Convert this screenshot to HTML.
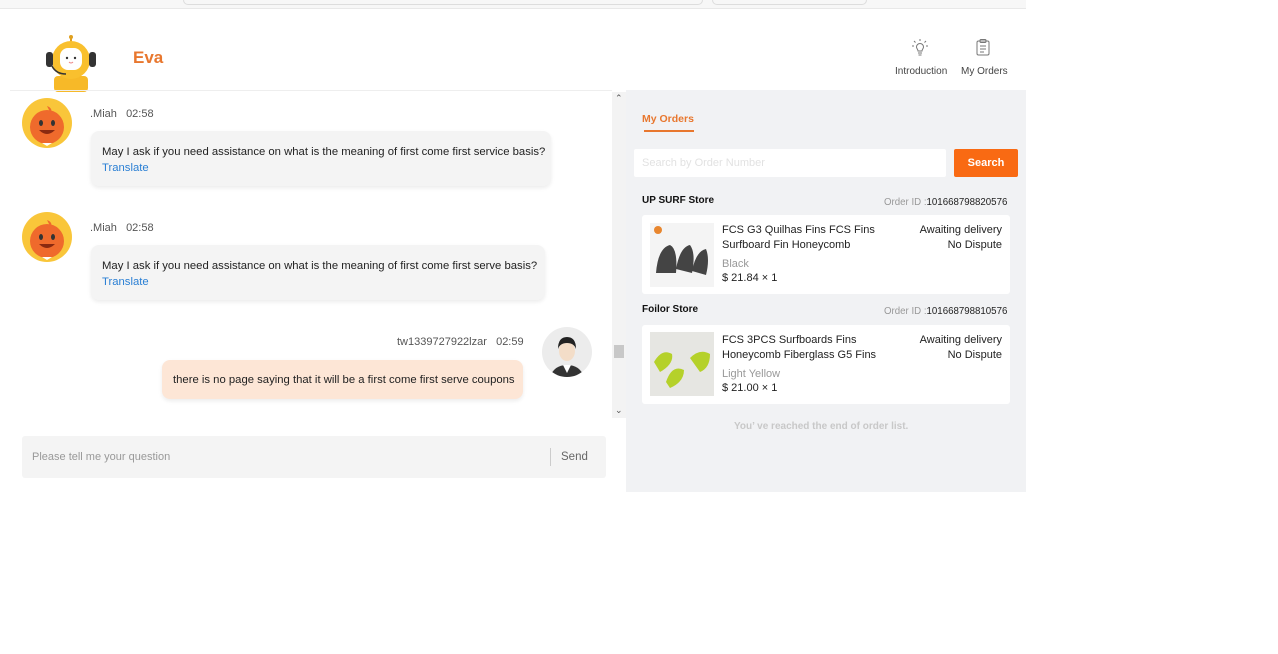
<!DOCTYPE html>
<html><head><meta charset="utf-8"><style>
*{margin:0;padding:0;box-sizing:border-box}
body{width:1278px;height:654px;background:#fff;font-family:"Liberation Sans",Arial,sans-serif;position:relative;overflow:hidden;color:#222}
.a{position:absolute;white-space:nowrap}
.bub{position:absolute;white-space:nowrap;background:#f4f4f4;border-radius:8px;box-shadow:0 2px 4px rgba(0,0,0,.08);font-size:11.3px;color:#222;padding:0 11px;line-height:16px}
.meta{position:absolute;font-size:11px;color:#555;white-space:nowrap}
.av{position:absolute;width:50px;height:50px;border-radius:50%;background:#f9c63a;overflow:hidden}
.card{position:absolute;left:642px;width:368px;background:#fff;border-radius:3px}
.ord{font-family:"Liberation Sans",sans-serif}
</style></head><body>
<div class="a" style="left:0;top:0;width:1026px;height:9px;background:#f7f7f7;border-bottom:1px solid #e8e8e8"></div>
<div class="a" style="left:183px;top:0;width:520px;height:5px;border:1px solid #ddd;border-top:none;border-radius:0 0 6px 6px"></div>
<div class="a" style="left:712px;top:0;width:155px;height:5px;border:1px solid #ddd;border-top:none;border-radius:0 0 6px 6px"></div>
<svg class="a" style="left:42px;top:34px" width="58" height="58" viewBox="0 0 58 58">
<line x1="29" y1="2" x2="29" y2="8" stroke="#e0a020" stroke-width="2"/>
<circle cx="29" cy="3" r="2" fill="#e0a020"/>
<rect x="12" y="42" width="34" height="16" rx="4" fill="#f7b928"/>
<circle cx="29" cy="26" r="19" fill="#f9c02e"/>
<rect x="4" y="18" width="7" height="15" rx="3" fill="#333"/>
<rect x="47" y="18" width="7" height="15" rx="3" fill="#333"/>
<rect x="18" y="14" width="22" height="22" rx="8" fill="#fff"/>
<circle cx="25" cy="24" r="1.2" fill="#333"/><circle cx="33" cy="24" r="1.2" fill="#333"/>
<path d="M27 28 Q29 30 31 28" stroke="#e88" fill="none"/>
<path d="M10 32 Q14 40 24 40" stroke="#333" stroke-width="1.5" fill="none"/>
</svg>
<div class="a" style="left:133px;top:48px;font-size:17px;font-weight:bold;color:#e8772e">Eva</div>
<svg class="a" style="left:910px;top:37px" width="20" height="20" viewBox="0 0 20 20" fill="none" stroke="#777" stroke-width="1">
<path d="M6.5 10a3.5 3.5 0 1 1 7 0c0 1.5-1.5 2.5-1.5 4h-4c0-1.5-1.5-2.5-1.5-4z"/><path d="M8 16h4M8.5 18h3M10 2v2M4 4l1.5 1.5M16 4l-1.5 1.5M2 9h2M16 9h2"/></svg>
<svg class="a" style="left:975px;top:38px" width="16" height="18" viewBox="0 0 16 18" fill="none" stroke="#777" stroke-width="1">
<rect x="2" y="3" width="12" height="14" rx="1.5"/><rect x="5" y="1.5" width="6" height="3" rx="1"/><path d="M5 8h6M5 11h6M5 14h4"/></svg>
<div class="a" style="left:895px;top:66px;font-size:10px;color:#444">Introduction</div>
<div class="a" style="left:961px;top:66px;font-size:10px;color:#444">My Orders</div>
<div class="a" style="left:10px;top:90px;width:602px;height:1px;background:#eee"></div>
<div class="a" style="left:612px;top:92px;width:14px;height:326px;background:#f3f3f3"></div>
<div class="a" style="left:614px;top:345px;width:10px;height:13px;background:#c8c8c8"></div>
<div class="a" style="left:615px;top:93px;font-size:9px;color:#555">⌃</div>
<div class="a" style="left:615px;top:405px;font-size:9px;color:#555">⌄</div>
<div class="av" style="left:22px;top:98px"><svg width="50" height="50"><circle cx="25" cy="29" r="17" fill="#ef6a2c"/><path d="M25 8 q6 2 4 8" fill="#ef6a2c"/><ellipse cx="19" cy="25" rx="2" ry="3" fill="#333"/><ellipse cx="31" cy="25" rx="2" ry="3" fill="#333"/><path d="M17 32 q8 8 16 0z" fill="#8a2a10"/><path d="M20 45 l5 3 5-3" fill="#fff"/></svg></div>
<div class="meta" style="left:90px;top:108px">.Miah&nbsp;&nbsp; 02:58</div>
<div class="bub" style="left:91px;top:131px;width:460px;height:55px;padding-top:13px">May I ask if you need assistance on what is the meaning of first come first service basis?<br><span style="color:#2a7fd4">Translate</span></div>
<div class="av" style="left:22px;top:212px"><svg width="50" height="50"><circle cx="25" cy="29" r="17" fill="#ef6a2c"/><path d="M25 8 q6 2 4 8" fill="#ef6a2c"/><ellipse cx="19" cy="25" rx="2" ry="3" fill="#333"/><ellipse cx="31" cy="25" rx="2" ry="3" fill="#333"/><path d="M17 32 q8 8 16 0z" fill="#8a2a10"/><path d="M20 45 l5 3 5-3" fill="#fff"/></svg></div>
<div class="meta" style="left:90px;top:222px">.Miah&nbsp;&nbsp; 02:58</div>
<div class="bub" style="left:91px;top:245px;width:454px;height:55px;padding-top:13px">May I ask if you need assistance on what is the meaning of first come first serve basis?<br><span style="color:#2a7fd4">Translate</span></div>
<div class="meta" style="left:397px;top:336px">tw1339727922lzar&nbsp;&nbsp; 02:59</div>
<div class="av" style="left:542px;top:327px;background:#ececec"><svg width="50" height="50"><path d="M8 50 q4-12 17-12 q13 0 17 12z" fill="#333"/><path d="M21 38 l4 8 4-8z" fill="#fff"/><ellipse cx="25" cy="24" rx="8" ry="10" fill="#f3ddc8"/><path d="M16 22 q0-12 9-12 q9 0 9 12 q-2-6-9-6 q-7 0-9 6z" fill="#222"/></svg></div>
<div class="bub" style="left:162px;top:360px;width:361px;height:39px;background:#fde6d6;padding-top:12px">there is no page saying that it will be a first come first serve coupons</div>
<div class="a" style="left:22px;top:436px;width:584px;height:42px;background:#f4f4f4;border-radius:3px"></div>
<div class="a" style="left:32px;top:451px;font-size:11px;color:#999">Please tell me your question</div>
<div class="a" style="left:550px;top:448px;width:1px;height:18px;background:#ccc"></div>
<div class="a" style="left:561px;top:451px;font-size:11.5px;color:#666">Send</div>
<div class="a" style="left:626px;top:90px;width:400px;height:402px;background:#f1f2f4"></div>
<div class="a ord" style="left:642px;top:113px;font-size:10.5px;font-weight:bold;color:#e8772e">My Orders</div>
<div class="a" style="left:644px;top:130px;width:50px;height:2px;background:#e8772e"></div>
<div class="a" style="left:634px;top:149px;width:312px;height:28px;background:#fff;border-radius:2px"></div>
<div class="a ord" style="left:642px;top:157px;font-size:11px;color:#e2e2e2">Search by Order Number</div>
<div class="a ord" style="left:954px;top:149px;width:64px;height:28px;background:#f96a13;border-radius:2px;color:#fff;font-size:11px;font-weight:bold;text-align:center;line-height:28px">Search</div>
<div class="a ord" style="left:642px;top:195px;font-size:10px;font-weight:bold;color:#111">UP SURF Store</div>
<div class="a ord" style="left:884px;top:197px;font-size:9.7px;color:#999">Order ID :<span style="color:#222">101668798820576</span></div>
<div class="card" style="top:215px;height:79px"></div>
<div class="a" style="left:650px;top:223px;width:64px;height:64px;background:#f4f4f4"></div>
<svg class="a" style="left:650px;top:223px" width="64" height="64"><circle cx="8" cy="7" r="4" fill="#e8862e"/><path d="M6 50 q2-25 14-28 q8 4 6 28z M26 46 q4-22 14-24 q6 8 2 28z M42 48 q4-20 14-22 q4 10 0 26z" fill="#444"/></svg>
<div class="a ord" style="left:722px;top:223px;font-size:11px;line-height:14.5px;color:#222">FCS G3 Quilhas Fins FCS Fins<br>Surfboard Fin Honeycomb</div>
<div class="a ord" style="left:722px;top:258px;font-size:11px;color:#999">Black</div>
<div class="a ord" style="left:722px;top:272px;font-size:11px;color:#222">$ 21.84 × 1</div>
<div class="a ord" style="left:880px;top:223px;width:122px;text-align:right;font-size:11px;line-height:14.5px;color:#222">Awaiting delivery<br>No Dispute</div>
<div class="a ord" style="left:642px;top:304px;font-size:10px;font-weight:bold;color:#111">Foilor Store</div>
<div class="a ord" style="left:884px;top:306px;font-size:9.7px;color:#999">Order ID :<span style="color:#222">101668798810576</span></div>
<div class="card" style="top:325px;height:79px"></div>
<div class="a" style="left:650px;top:332px;width:64px;height:64px;background:#e6e6e2"></div>
<svg class="a" style="left:650px;top:332px" width="64" height="64"><path d="M4 30 q8-14 18-8 q2 10-12 18z M16 50 q6-18 18-12 q0 12-14 18z M40 26 q10-10 20-4 q0 14-10 18z" fill="#b5d12a"/></svg>
<div class="a ord" style="left:722px;top:333px;font-size:11px;line-height:14.5px;color:#222">FCS 3PCS Surfboards Fins<br>Honeycomb Fiberglass G5 Fins</div>
<div class="a ord" style="left:722px;top:368px;font-size:11px;color:#999">Light Yellow</div>
<div class="a ord" style="left:722px;top:382px;font-size:11px;color:#222">$ 21.00 × 1</div>
<div class="a ord" style="left:880px;top:333px;width:122px;text-align:right;font-size:11px;line-height:14.5px;color:#222">Awaiting delivery<br>No Dispute</div>
<div class="a ord" style="left:734px;top:421px;font-size:10px;font-weight:bold;color:#c8c8c8">You’ ve reached the end of order list.</div>
</body></html>
